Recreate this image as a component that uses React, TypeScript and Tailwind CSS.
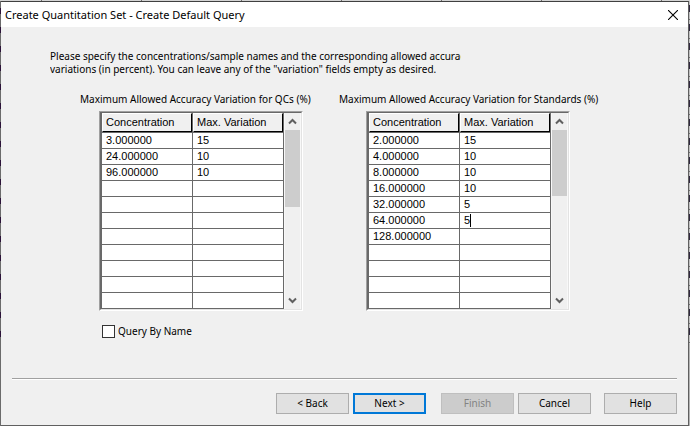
import React, { useState } from "react";

type Row = {
  concentration: string;
  variation: string;
};

const ROW_COUNT = 11;

const qcRows: Row[] = [
  { concentration: "3.000000", variation: "15" },
  { concentration: "24.000000", variation: "10" },
  { concentration: "96.000000", variation: "10" },
];

const standardRows: Row[] = [
  { concentration: "2.000000", variation: "15" },
  { concentration: "4.000000", variation: "10" },
  { concentration: "8.000000", variation: "10" },
  { concentration: "16.000000", variation: "10" },
  { concentration: "32.000000", variation: "5" },
  { concentration: "64.000000", variation: "5" },
  { concentration: "128.000000", variation: "" },
];

const HeaderCell = ({ children }: { children: React.ReactNode }) => (
  <th scope="col" className="border-r border-b border-[#696969] p-0 text-left font-normal">
    <div className="h-[19px] overflow-hidden border border-t-white border-l-white border-r-black border-b-black bg-[#f0f0f0] pl-[3px] leading-4 whitespace-nowrap">
      {children}
    </div>
  </th>
);

const Chevron = ({ d }: { d: string }) => (
  <svg width="9" height="7" viewBox="0 0 9 7" fill="none" stroke="#606060" strokeWidth="2">
    <path d={d} />
  </svg>
);

const ScrollBar = ({ thumb }: { thumb: string }) => (
  <div className="flex w-[17px] flex-col border-r border-l border-[#f8f8f8] bg-[#f0f0f0]">
    <button aria-label="Scroll up" className="flex h-[17px] items-center justify-center">
      <Chevron d="M1 5.5 4.5 2 8 5.5" />
    </button>
    <div className={`bg-[#cdcdcd] ${thumb}`} />
    <button aria-label="Scroll down" className="mt-auto flex h-[17px] items-center justify-center">
      <Chevron d="M1 1.5 4.5 5 8 1.5" />
    </button>
  </div>
);

type GridProps = {
  label: string;
  rows: Row[];
  thumb: string;
  activeRow?: number;
};

const VariationGrid = ({ label, rows, thumb, activeRow }: GridProps) => {
  const blanks = Array.from({ length: ROW_COUNT - rows.length }, () => ({
    concentration: "",
    variation: "",
  }));

  return (
    <div className="inline-flex border border-t-[#a0a0a0] border-r-white border-b-white border-l-[#a0a0a0]">
      <div className="flex border border-t-[#696969] border-r-[#e3e3e3] border-b-[#e3e3e3] border-l-[#696969]">
        <table
          aria-label={label}
          className="w-[183px] table-fixed border-separate border-spacing-0 border-l border-[#696969] bg-white font-['Liberation_Sans',sans-serif] text-[11px]"
        >
          <thead>
            <tr>
              <HeaderCell>Concentration</HeaderCell>
              <HeaderCell>Max. Variation</HeaderCell>
            </tr>
          </thead>
          <tbody>
            {[...rows, ...blanks].map((row, i) => (
              <tr key={i}>
                <td className="h-4 border-r border-b border-[#696969] p-0 pl-1 leading-[15px]">
                  {row.concentration}
                </td>
                <td className="h-4 border-r border-b border-[#696969] p-0 pl-1 leading-[15px]">
                  {i === activeRow ? (
                    <div className="flex h-[15px]">
                      <input
                        aria-label={`Max. variation for ${row.concentration}`}
                        defaultValue={row.variation}
                        className="w-[6px] p-0 outline-none"
                      />
                      <span className="my-px w-px bg-black" />
                    </div>
                  ) : (
                    row.variation
                  )}
                </td>
              </tr>
            ))}
          </tbody>
        </table>
        <ScrollBar thumb={thumb} />
      </div>
    </div>
  );
};

const buttonBase = "h-[21px] w-[73px]";
const buttonNormal = `${buttonBase} border border-[#adadad] bg-[#e1e1e1]`;

// Sheet behind the dialog, visible only along its edges
const columnTicks = [42, 100, 100, 100, 100, 100, 120];

const App = () => {
  const [byName, setByName] = useState(false);

  return (
    <div className="flex min-h-screen flex-col bg-[#d4d4d4] font-['Noto_Sans',sans-serif] text-[10px] leading-[13px] text-black">
      <div className="flex h-px overflow-hidden">
        {columnTicks.map((width, i) => (
          <div key={i} className="shrink-0 border-r border-[#707070]" style={{ width }} />
        ))}
      </div>
      <div className="flex grow">
        <div className="flex w-px flex-col bg-[#6b6b6b]">
          <div className="h-[343px] bg-[repeating-linear-gradient(to_bottom,#6b6b6b_0_7px,#2b1238_7px_13px,#6b6b6b_13px_19px)]" />
        </div>
        <main className="flex grow flex-col border-t border-r border-b border-t-[#404040] border-r-[#606060] border-b-[#606060] bg-[#f0f0f0]">
          <header className="flex h-[25px] items-center justify-between bg-white pr-[10px] pl-1">
            <h1 className="text-[11px]">Create Quantitation Set - Create Default Query</h1>
            <button aria-label="Close">
              <svg width="10" height="10" viewBox="0 0 10 10" stroke="#000" strokeWidth="1.1">
                <path d="M0 0 10 10M10 0 0 10" />
              </svg>
            </button>
          </header>

          <p className="mt-[23px] ml-[49px] w-[411px] overflow-hidden whitespace-nowrap">
            Please specify the concentrations/sample names and the corresponding allowed accuracy
            <br />
            variations (in percent). You can leave any of the "variation" fields empty as desired.
          </p>

          <div className="mt-[17px] ml-[79px] flex">
            <section className="w-[259px]">
              <h2 className="mb-[5px] whitespace-nowrap">
                Maximum Allowed Accuracy Variation for QCs (%)
              </h2>
              <div className="flex pl-[19px]">
                <VariationGrid label="QCs" rows={qcRows} thumb="h-[77px]" />
              </div>
            </section>
            <section>
              <h2 className="mb-[5px] whitespace-nowrap">
                Maximum Allowed Accuracy Variation for Standards (%)
              </h2>
              <div className="flex pl-[27px]">
                <VariationGrid
                  label="Standards"
                  rows={standardRows}
                  thumb="h-[66px]"
                  activeRow={5}
                />
              </div>
            </section>
          </div>

          <label className="mt-[14px] ml-[101px] flex items-center gap-[3px] self-start">
            <input
              type="checkbox"
              checked={byName}
              onChange={(e) => setByName(e.target.checked)}
              className="size-[13px] appearance-none border border-[#333333] bg-white checked:bg-[#333333]"
            />
            Query By Name
          </label>

          <footer className="mt-auto mr-[11px] mb-[11px] ml-[11px]">
            <div className="border-t border-b border-t-[#a0a0a0] border-b-white" />
            <div className="mt-[13px] flex justify-end">
              <button className={buttonNormal}>&lt; Back</button>
              <button className={`${buttonBase} ml-1 border-2 border-[#0078d7] bg-[#e1e1e1]`}>
                Next &gt;
              </button>
              <button
                disabled
                className={`${buttonBase} ml-[15px] border border-[#bfbfbf] bg-[#cccccc] text-[#838383]`}
              >
                Finish
              </button>
              <button className={`${buttonNormal} ml-1`}>Cancel</button>
              <button className={`${buttonNormal} ml-[13px]`}>Help</button>
            </div>
          </footer>
        </main>
        <div className="w-px bg-[#b4b4b4]">
          <div className="h-[343px] bg-[repeating-linear-gradient(to_bottom,#c0c0c0_0_4px,#30283f_4px_11px,#c0c0c0_11px_18px,#707070_18px_19px)]" />
        </div>
      </div>
    </div>
  );
};

export default App;
